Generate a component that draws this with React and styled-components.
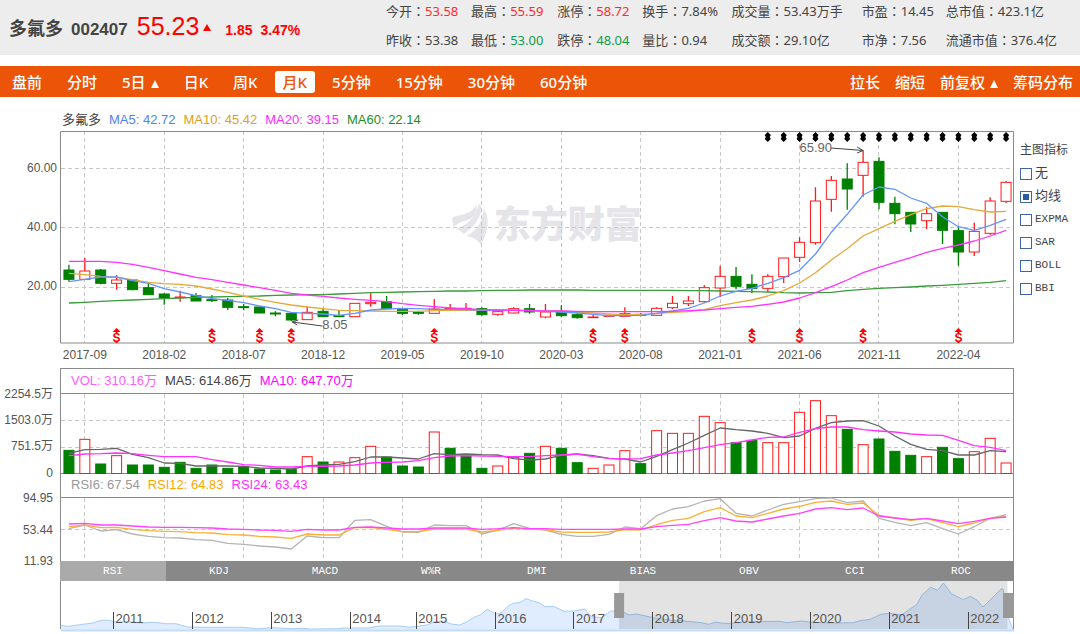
import React, { useLayoutEffect, useRef, useState } from "react";
import styled, { createGlobalStyle } from "styled-components";

const Page = createGlobalStyle`
  * { box-sizing: border-box; }
  body {
    margin: 0;
    background: #fff;
    color: #444;
    font-family: "Noto Sans", "Noto Sans CJK SC", sans-serif;
    font-size: 13px;
  }
  button { font: inherit; border: 0; background: none; cursor: pointer; }
`;

const GUTTER = 61;
const NUMERIC = '"Liberation Sans", "Noto Sans CJK SC", sans-serif';
const UP = "#ff1a1a";
const DOWN = "#008000";
const AXIS = "#8a8a8a";

/* ---------- header ---------- */

const Header = styled.header`
  display: flex;
  align-items: center;
  min-height: 55px;
  padding-left: 9px;
  background: #ededed;
`;

const Quote = styled.div`
  display: flex;
  align-items: baseline;
  flex: 0 0 377px;
  font-family: ${NUMERIC};
  font-weight: bold;
  line-height: 32px;
`;

const StockName = styled.h1`
  margin: 0 8px 0 0;
  font-size: 18px;
  color: #444;
`;

const StockCode = styled.span`
  margin-right: 9px;
  font-size: 17px;
`;

const Price = styled.span`
  margin-right: 4px;
  font-size: 25px;
  font-weight: normal;
  color: #f00;
`;

const Change = styled.span`
  margin-left: 8px;
  font-size: 14px;
  color: #f00;
`;

const Triangle = styled.i`
  width: 0;
  height: 0;
  border: solid transparent;
  border-width: 0 4px 8px;
  border-bottom-color: currentColor;
`;

const MenuMark = styled(Triangle)`
  margin-top: 4px;
`;

const RiseMark = styled(Triangle)`
  align-self: center;
  margin-right: 6px;
  border-bottom-width: 7px;
  color: #f00;
`;

const Stats = styled.div`
  display: grid;
  flex: 1;
  grid-template-columns: 85fr 86fr 85fr 89fr 130fr 84fr 134fr;
  grid-auto-rows: 24px;
  row-gap: 5px;
  padding-bottom: 2px;
  line-height: 22px;
  white-space: nowrap;
`;

const Colon = styled.span`
  font-family: "Noto Sans CJK TC", sans-serif;
  line-height: 0;
`;

const StatValue = styled.span`
  color: ${(p) => p.$color || "inherit"};
`;

const stats = [
  ["今开", "53.58", "#ff2a2a"],
  ["最高", "55.59", "#ff2a2a"],
  ["涨停", "58.72", "#ff2a2a"],
  ["换手", "7.84%"],
  ["成交量", "53.43万手"],
  ["市盈", "14.45"],
  ["总市值", "423.1亿"],
  ["昨收", "53.38"],
  ["最低", "53.00", "#149a4a"],
  ["跌停", "48.04", "#149a4a"],
  ["量比", "0.94"],
  ["成交额", "29.10亿"],
  ["市净", "7.56"],
  ["流通市值", "376.4亿"],
];

/* ---------- period bar ---------- */

const PeriodBar = styled.nav`
  display: flex;
  justify-content: space-between;
  align-items: center;
  height: 31px;
  margin-top: 11px;
  padding: 0 7px 0 4px;
  background: #ec5407;
  color: #fff;
  font-size: 15px;
  font-weight: 500;
`;

const Group = styled.div`
  display: flex;
  gap: ${(p) => p.$gap}px;
`;

const BarButton = styled.button`
  display: flex;
  align-items: center;
  gap: 5px;
  height: 22px;
  padding: 0 ${(p) => (p.$tool ? 0 : 8)}px;
  border-radius: 3px;
  background: ${(p) => (p.$active ? "#fff" : "transparent")};
  color: ${(p) => (p.$active ? "#ec5407" : "#fff")};
  line-height: 22px;
  white-space: nowrap;
`;

const periods = ["盘前", "分时", "5日", "日K", "周K", "月K", "5分钟", "15分钟", "30分钟", "60分钟"];
const tools = ["拉长", "缩短", "前复权", "筹码分布"];
const withMenu = ["5日", "前复权"];

/* ---------- chart frame ---------- */

const Main = styled.main`
  display: flex;
  align-items: flex-start;
`;

const Charts = styled.section`
  flex: 1;
  min-width: 0;
`;

const Legend = styled.div`
  display: flex;
  align-items: center;
  gap: 8px;
  height: 25px;
  padding-left: 10px;
  margin-left: ${GUTTER - 1}px;
  border: solid ${AXIS};
  border-width: 0 1px 1px;
  font: 13px/22px ${NUMERIC};
  white-space: nowrap;
`;

const PriceLegend = styled(Legend)`
  height: 34px;
  padding: 11px 0 0 2px;
  border: 0;
`;

const VolumeLegend = styled(Legend)`
  height: 26px;
  border-top-width: 1px;
`;

const LegendItem = styled.span`
  color: ${(p) => p.$color};
`;

const Canvas = styled.svg`
  display: block;
  width: 100%;
  height: ${(p) => p.$height}px;
  overflow: visible;
  font-family: ${NUMERIC};
  font-size: 12px;
  fill: none;
`;

const Tabs = styled.div`
  display: flex;
  margin-left: ${GUTTER - 1}px;
  background: #888;
`;

const Tab = styled.button`
  flex: 1;
  height: 20px;
  padding: 0;
  background: ${(p) => (p.$active ? "#aaa" : "transparent")};
  color: #fff;
  font: 11px/20px "Liberation Mono", monospace;
`;

/* ---------- sidebar ---------- */

const Sidebar = styled.fieldset`
  flex: 0 0 66px;
  margin: 0;
  padding: 42px 0 0 6px;
  border: 0;
`;

const SidebarTitle = styled.div`
  margin-bottom: 1px;
  font-size: 12px;
  line-height: 22px;
  white-space: nowrap;
`;

const Option = styled.label`
  display: flex;
  align-items: center;
  gap: 3px;
  height: 23px;
  font: 11px/23px "Liberation Mono", "Noto Sans CJK SC", monospace;
  white-space: nowrap;
`;

const OptionText = styled.span`
  font-size: ${(p) => (p.$han ? 13 : 11)}px;
`;

const Box = styled.input`
  appearance: none;
  flex: none;
  width: 12px;
  height: 12px;
  margin: 0;
  border: 1px solid #3c66a4;
  background: #fff;
  &:checked {
    background: #2c5a9c;
    box-shadow: inset 0 0 0 2px #fff;
  }
`;

const overlays = ["无", "均线", "EXPMA", "SAR", "BOLL", "BBI"];

/* ---------- data: every chart unit is a third of a pixel ---------- */

// [up?, body top, body bottom, high, low]
const candles = [
  [0, 450, 478, 434, 485], [1, 453, 478, 414, 478], [0, 450, 490, 447, 493], [1, 480, 490, 465, 509],
  [0, 480, 509, 478, 511], [0, 503, 524, 492, 524], [0, 522, 534, 520, 554], [1, 531, 533, 512, 545],
  [0, 527, 543, 519, 543], [0, 539, 542, 525, 546], [0, 540, 562, 534, 570], [0, 560, 563, 552, 571],
  [0, 561, 579, 560, 580], [0, 579, 582, 574, 589], [0, 580, 600, 578, 604], [1, 577, 599, 559, 599],
  [0, 574, 590, 567, 592], [0, 587, 590, 572, 591], [1, 550, 590, 550, 590], [1, 547, 551, 520, 560],
  [0, 545, 566, 528, 568], [0, 566, 580, 564, 585], [0, 577, 580, 572, 584], [1, 567, 580, 537, 580],
  [1, 565, 568, 552, 570], [1, 565, 568, 549, 570], [0, 566, 584, 562, 587], [1, 575, 583, 572, 587],
  [1, 566, 579, 562, 580], [0, 566, 576, 552, 581], [1, 576, 591, 552, 595], [0, 577, 587, 556, 592],
  [0, 584, 593, 577, 596], [1, 591, 593, 584, 593], [1, 587, 589, 586, 590], [1, 581, 589, 562, 590],
  [0, 583, 586, 580, 589], [1, 565, 586, 562, 587], [1, 550, 563, 528, 567], [1, 543, 551, 528, 558],
  [1, 503, 545, 495, 548], [1, 469, 504, 437, 532], [0, 469, 499, 441, 508], [0, 493, 505, 463, 520],
  [1, 469, 505, 463, 515], [1, 414, 470, 414, 489], [1, 367, 412, 352, 426], [1, 243, 368, 202, 374],
  [1, 181, 238, 168, 275], [0, 177, 207, 130, 269], [1, 127, 166, 91, 230], [0, 124, 247, 112, 268],
  [0, 250, 281, 230, 313], [0, 277, 312, 276, 336], [1, 281, 302, 262, 327], [0, 277, 331, 276, 372],
  [0, 332, 396, 322, 437], [1, 334, 396, 308, 408], [1, 243, 340, 232, 344], [1, 187, 244, 183, 249],
];

const ma5 = [485, 478, 471, 471, 482, 490, 506, 516, 527, 536, 541, 548, 558, 566, 577, 580, 582, 586, 580, 570,
  567, 565, 566, 568, 568, 569, 570, 571, 571, 572, 574, 576, 579, 583, 587, 587, 586, 580, 573, 565,
  549, 528, 514, 505, 490, 473, 451, 402, 337, 283, 225, 201, 208, 234, 250, 290, 320, 331, 316, 298];
const ma10 = [460, 464, 469, 472, 479, 487, 491, 493, 498, 507, 517, 528, 538, 547, 555, 561, 566, 571, 572, 573,
  574, 574, 574, 572, 571, 571, 570, 570, 571, 571, 574, 573, 576, 579, 582, 584, 584, 580, 577, 575,
  569, 557, 548, 540, 528, 512, 489, 458, 420, 386, 348, 326, 304, 284, 266, 258, 260, 269, 276, 274];
const ma20 = [424, 424, 424, 427, 433, 442, 452, 462, 472, 479, 487, 495, 503, 511, 520, 525, 529, 534, 538, 541,
  545, 551, 556, 560, 564, 566, 569, 570, 571, 572, 573, 573, 574, 575, 575, 575, 575, 575, 574, 572,
  570, 566, 562, 559, 553, 546, 534, 518, 500, 480, 458, 442, 427, 413, 397, 385, 375, 363, 348, 331];
const ma60 = [549, 547, 544, 542, 540, 538, 536, 534, 532, 531, 530, 529, 528, 526, 525, 524, 524, 522, 520, 518,
  517, 516, 515, 514, 513, 513, 512, 511, 511, 510, 510, 510, 510, 511, 511, 511, 511, 511, 511, 512,
  512, 513, 514, 515, 516, 518, 519, 518, 517, 512, 508, 505, 503, 501, 498, 496, 493, 490, 487, 482];

const volume = [253, 220, 294, 269, 297, 297, 304, 289, 307, 297, 307, 301, 309, 312, 310, 272, 288, 288, 275, 241,
  273, 300, 303, 198, 247, 270, 307, 300, 274, 262, 241, 247, 290, 307, 297, 254, 293, 194, 202, 202,
  151, 170, 230, 223, 230, 230, 139, 104, 149, 190, 236, 219, 256, 268, 272, 244, 278, 257, 217, 291];
// months whose volume bar is filled green and hollow red against their candle
const volumeDown = [7, 24, 25];
const volumeUp = [17];
const volumeMa5 = [262, 251, 250, 247, 265, 275, 291, 292, 300, 300, 300, 301, 306, 307, 309, 300, 297, 295, 287, 273,
  273, 276, 279, 263, 266, 264, 266, 267, 278, 282, 279, 268, 264, 269, 277, 279, 288, 271, 251, 231,
  208, 186, 191, 195, 202, 215, 210, 187, 170, 165, 164, 180, 210, 235, 250, 254, 267, 267, 254, 257];
const volumeMa10 = [269, 264, 263, 261, 263, 268, 272, 272, 272, 281, 288, 296, 298, 303, 303, 301, 301, 300, 297, 291,
  289, 288, 284, 275, 270, 269, 270, 271, 272, 272, 269, 267, 264, 272, 277, 279, 278, 267, 261, 254,
  245, 236, 230, 222, 214, 213, 199, 188, 183, 183, 191, 195, 198, 204, 207, 208, 223, 239, 244, 254];

const rsi6 = [161, 150, 168, 164, 177, 184, 188, 189, 194, 196, 205, 208, 213, 216, 222, 183, 188, 188, 136, 134,
  154, 171, 172, 150, 152, 152, 177, 165, 146, 160, 165, 178, 184, 184, 178, 156, 161, 122, 102, 95,
  78, 71, 115, 123, 105, 88, 80, 71, 69, 83, 78, 130, 142, 152, 143, 161, 177, 155, 130, 119];
const rsi12 = [155, 150, 158, 157, 163, 167, 169, 170, 173, 174, 179, 180, 184, 186, 190, 177, 180, 180, 158, 157,
  163, 170, 170, 162, 162, 162, 171, 166, 159, 163, 164, 171, 172, 172, 171, 164, 165, 149, 136, 130,
  110, 98, 123, 128, 115, 102, 94, 82, 78, 88, 84, 121, 129, 136, 131, 143, 155, 144, 130, 124];
const rsi24 = [147, 145, 150, 150, 153, 156, 157, 157, 158, 159, 162, 163, 165, 166, 169, 163, 165, 165, 157, 156,
  159, 162, 162, 159, 159, 159, 163, 161, 158, 161, 161, 163, 163, 163, 163, 162, 162, 155, 151, 148,
  137, 128, 138, 141, 132, 123, 115, 102, 98, 104, 99, 123, 129, 134, 130, 138, 146, 139, 130, 126];

const history = [
  [178, 452], [200, 454], [240, 448], [270, 444], [295, 436], [318, 436], [330, 441], [375, 440], [410, 444],
  [450, 442], [480, 446], [510, 446], [545, 456], [600, 457], [700, 457], [750, 461], [790, 458], [850, 461],
  [880, 460], [900, 462], [980, 461], [1000, 459], [1070, 459], [1100, 453], [1160, 453], [1190, 457],
  [1240, 450], [1262, 440], [1290, 438], [1310, 447], [1335, 450], [1355, 441], [1380, 425], [1395, 420],
  [1415, 403], [1440, 417], [1455, 414], [1480, 390], [1495, 384], [1510, 383], [1528, 371], [1550, 379],
  [1568, 385], [1583, 395], [1608, 394], [1638, 409], [1668, 408], [1698, 402], [1718, 425], [1748, 428],
  [1773, 408], [1808, 410], [1828, 420], [1848, 417], [1898, 428], [1950, 436], [1988, 438], [2038, 443],
  [2058, 448], [2078, 441], [2098, 445], [2123, 445], [2168, 440], [2268, 439], [2283, 443], [2328, 438],
  [2358, 442], [2418, 444], [2478, 443], [2498, 437], [2528, 433], [2558, 418], [2583, 415], [2618, 420],
  [2663, 388], [2678, 360], [2703, 337], [2723, 346], [2740, 324], [2763, 356], [2798, 374], [2818, 364],
  [2838, 376], [2855, 396], [2908, 341], [2914, 343], [2918, 400], [2943, 466],
];
const HISTORY_SPAN = 2945;
const years = [330, 560, 788, 1017, 1209, 1439, 1667, 1896, 2125, 2354, 2583, 2812];

const dates = ["2017-09", "2018-02", "2018-07", "2018-12", "2019-05", "2019-10",
  "2020-03", "2020-08", "2021-01", "2021-06", "2021-11", "2022-04"];
const signals = [3, 9, 12, 14, 23, 33, 35, 43, 46, 50, 56];

/* ---------- drawing helpers ---------- */

const slotOf = (width) => (width - GUTTER) / candles.length;
const centre = (width, i) => GUTTER + slotOf(width) * (i + 0.5);

function Line({ width, data, offset, color }) {
  const points = data.map((v, i) => `${centre(width, i).toFixed(1)},${(v / 3 - offset).toFixed(1)}`).join(" ");
  return <polyline points={points} stroke={color} strokeWidth="1.3" strokeLinejoin="round" />;
}

function Grid({ width, height, rows }) {
  return (
    <g stroke="#c8c8c8" strokeDasharray="4 3">
      {rows.map((y) => <path key={y} d={`M${GUTTER} ${y}.5H${width}`} />)}
      {dates.map((d, k) => <path key={d} d={`M${Math.floor(centre(width, 1 + k * 5))}.5 0V${height}`} />)}
    </g>
  );
}

function AxisText({ rows, right }) {
  return rows.map(([y, text]) => (
    <text key={text} x={right} y={y + 4} textAnchor="end" fill="#555">{text}</text>
  ));
}

function Watermark({ x }) {
  return (
    <g transform={`translate(${x} 73)`} fill="#e4e4e9">
      <path d="M0 13 Q3 12 9 11 Q20 8 24 1 Q25 12 15 16 Q6 18 1 23 Q-1 17 0 13Z" />
      <path d="M3 25 Q22 19 26 0 Q29 2 29 6 Q25 21 11 30 Q8 26 3 25Z" />
      <path d="M31 4 Q40 20 28 41 Q25 34 14 32 Q30 23 31 4Z" />
      <text x="41" y="34" fontSize="37" fontWeight="900">东方财富</text>
    </g>
  );
}

function PriceChart({ width }) {
  const y = (v) => v / 3 - 11;
  const low = centre(width, 14);
  const high = centre(width, 50);
  return (
    <Canvas $height={237} role="img" aria-label="月K">
      <Watermark x={GUTTER + (width - GUTTER) * 0.411} />
      <Grid width={width} height={212} rows={[37, 96, 156]} />
      <path d={`M${GUTTER - 0.5} .5H${width - 0.5}V212H${GUTTER - 0.5}Z`} stroke={AXIS} />
      <AxisText right={57} rows={[[37, "60.00"], [96, "40.00"], [155, "20.00"]]} />
      {dates.map((d, k) => (
        <text key={d} x={centre(width, 1 + k * 5)} y="228" textAnchor="middle" fill="#555">{d}</text>
      ))}
      {candles.map(([up, top, bottom, hi, lo], i) => {
        const x = centre(width, i);
        const color = up ? UP : DOWN;
        return (
          <g key={i} stroke={color}>
            <path d={`M${x} ${y(hi)}V${y(top)}M${x} ${y(bottom)}V${y(lo)}`} strokeWidth="1.3" />
            <rect x={x - 5} y={y(top)} width="10" height={(bottom - top) / 3} fill={up ? "#fff" : color} />
          </g>
        );
      })}
      <Line width={width} data={ma60} offset={11} color="#3a9c3a" />
      <Line width={width} data={ma10} offset={11} color="#e2aa3a" />
      <Line width={width} data={ma5} offset={11} color="#6495ff" />
      <Line width={width} data={ma20} offset={11} color="#ff33ff" />
      {signals.map((i) => (
        <g key={i} transform={`translate(${centre(width, i)} 197)`} fill="#f00">
          <path d="M0 0L4 4H1V6H-1V4H-4Z" />
          <path d="M-1 13H1V15H-1Z" />
          <text y="14" textAnchor="middle" fontSize="12" fontWeight="bold">S</text>
        </g>
      ))}
      {candles.slice(44).map((_, k) => (
        <path
          key={k}
          transform={`translate(${centre(width, 44 + k)} 1)`}
          fill="#000"
          d="M0 0L3 3L2 5L3 7L0 10L-3 7L-2 5L-3 3Z"
        />
      ))}
      <g stroke="#444">
        <path d={`M${low + 31} 195L${low + 1} 191M${low + 7} 189L${low + 1} 191L${low + 6} 194`} />
        <path d={`M${high - 32} 17L${high} 19.5M${high - 6} 16L${high} 19.5L${high - 6} 22`} />
      </g>
      <text x={low + 31} y="198" fontSize="13" fill="#666">8.05</text>
      <text x={high - 31} y="21" fontSize="13" textAnchor="end" fill="#666">65.90</text>
    </Canvas>
  );
}

function VolumeChart({ width }) {
  return (
    <Canvas $height={79} role="img" aria-label="VOL">
      <Grid width={width} height={79} rows={[26, 53]} />
      <AxisText right={53} rows={[[0, "2254.5万"], [26, "1503.0万"], [52, "751.5万"], [79, "0"]]} />
      <path d={`M${GUTTER - 0.5} 0V79.5H${width - 0.5}V0`} stroke={AXIS} />
      {volume.map((v, i) => {
        const up = (candles[i][0] && !volumeDown.includes(i)) || volumeUp.includes(i);
        const top = v / 3 - 28;
        return (
          <rect
            key={i}
            x={centre(width, i) - 5}
            y={top}
            width="10"
            height={79.5 - top}
            stroke={up ? UP : DOWN}
            fill={up ? "#fff" : DOWN}
          />
        );
      })}
      <Line width={width} data={volumeMa5} offset={28} color="#666" />
      <Line width={width} data={volumeMa10} offset={28} color="#ff33ff" />
    </Canvas>
  );
}

function RsiChart({ width }) {
  return (
    <Canvas $height={63} role="img" aria-label="RSI">
      <Grid width={width} height={63} rows={[31]} />
      <AxisText right={53} rows={[[0, "94.95"], [32, "53.44"], [63, "11.93"]]} />
      <path d={`M${GUTTER - 0.5} 0V63M${width - 0.5} 0V63`} stroke={AXIS} />
      <Line width={width} data={rsi6} offset={23} color="#b4b4b4" />
      <Line width={width} data={rsi12} offset={23} color="#fbb034" />
      <Line width={width} data={rsi24} offset={23} color="#ff44ff" />
    </Canvas>
  );
}

function Overview({ width }) {
  const x = (v) => (v * width) / HISTORY_SPAN;
  const points = history.map(([u, v]) => `${x(u).toFixed(1)},${(v / 3 - 106).toFixed(1)}`).join(" L");
  const from = x(1798);
  const to = x(2926);
  return (
    <Canvas $height={53} role="img" aria-label="2011 - 2022">
      <path d={`M${GUTTER} 50L${points}L${width} 50Z`} fill="#e0ecff" />
      <path d={`M${points}`} stroke="#a5cdf8" />
      <path d={`M${GUTTER} 49.5H${width}`} stroke="#c4ddf8" strokeWidth="2" />
      <rect x={from} y="0" width={to - from} height="48" fill="#000" fillOpacity=".11" />
      <path d={`M${GUTTER - 0.5} 0V48M${width - 0.5} 0V48`} stroke={AXIS} />
      {years.map((v, k) => (
        <g key={v}>
          <path d={`M${Math.floor(x(v))}.5 31V48`} stroke="#444" />
          <text x={x(v) + 2} y="42" fontSize="13" fill="#555">{2011 + k}</text>
        </g>
      ))}
      <rect x={from - 5} y="12" width="10" height="25" fill="#999" />
      <rect x={width - 11} y="12" width="11" height="25" fill="#999" />
    </Canvas>
  );
}

/* ---------- page ---------- */

const priceLegend = [["多氟多", "#444"], ["MA5: 42.72", "#4f82f5"], ["MA10: 45.42", "#dda021"],
  ["MA20: 39.15", "#ff2bff"], ["MA60: 22.14", "#1d8f1d"]];
const volumeLegend = [["VOL: 310.16万", "#ff5cff"], ["MA5: 614.86万", "#444"], ["MA10: 647.70万", "#f0f"]];
const rsiLegend = [["RSI6: 67.54", "#999"], ["RSI12: 64.83", "#ffa500"], ["RSI24: 63.43", "#ff2bff"]];
const indicators = ["RSI", "KDJ", "MACD", "W%R", "DMI", "BIAS", "OBV", "CCI", "ROC"];

const legendItems = (items) => items.map(([text, color]) => (
  <LegendItem key={text} $color={color}>{text}</LegendItem>
));

export default function App() {
  const frame = useRef(null);
  const [width, setWidth] = useState(1014);
  const [period, setPeriod] = useState("月K");
  const [overlay, setOverlay] = useState("均线");
  const [indicator, setIndicator] = useState("RSI");

  useLayoutEffect(() => {
    const measure = () => setWidth(frame.current.clientWidth);
    measure();
    const observer = new ResizeObserver(measure);
    observer.observe(frame.current);
    return () => observer.disconnect();
  }, []);

  return (
    <>
      <Page />
      <Header>
        <Quote>
          <StockName>多氟多</StockName>
          <StockCode>002407</StockCode>
          <Price>55.23</Price>
          <RiseMark />
          <Change>1.85</Change>
          <Change>3.47%</Change>
        </Quote>
        <Stats>
          {stats.map(([label, value, color]) => (
            <div key={label}>
              {label}<Colon>：</Colon><StatValue $color={color}>{value}</StatValue>
            </div>
          ))}
        </Stats>
      </Header>
      <PeriodBar>
        <Group $gap={9}>
          {periods.map((p) => (
            <BarButton key={p} $active={p === period} onClick={() => setPeriod(p)}>
              {p}{withMenu.includes(p) && <MenuMark />}
            </BarButton>
          ))}
        </Group>
        <Group $gap={15}>
          {tools.map((t) => (
            <BarButton key={t} $tool>
              {t}{withMenu.includes(t) && <MenuMark />}
            </BarButton>
          ))}
        </Group>
      </PeriodBar>
      <Main>
        <Charts ref={frame}>
          <PriceLegend>{legendItems(priceLegend)}</PriceLegend>
          <PriceChart width={width} />
          <VolumeLegend>{legendItems(volumeLegend)}</VolumeLegend>
          <VolumeChart width={width} />
          <Legend>{legendItems(rsiLegend)}</Legend>
          <RsiChart width={width} />
          <Tabs role="tablist">
            {indicators.map((t) => (
              <Tab
                key={t}
                role="tab"
                aria-selected={t === indicator}
                $active={t === indicator}
                onClick={() => setIndicator(t)}
              >
                {t}
              </Tab>
            ))}
          </Tabs>
          <Overview width={width} />
        </Charts>
        <Sidebar aria-label="主图指标">
          <SidebarTitle>主图指标</SidebarTitle>
          {overlays.map((o, i) => (
            <Option key={o}>
              <Box type="radio" name="overlay" checked={o === overlay} onChange={() => setOverlay(o)} />
              <OptionText $han={i < 2}>{o}</OptionText>
            </Option>
          ))}
        </Sidebar>
      </Main>
    </>
  );
}
